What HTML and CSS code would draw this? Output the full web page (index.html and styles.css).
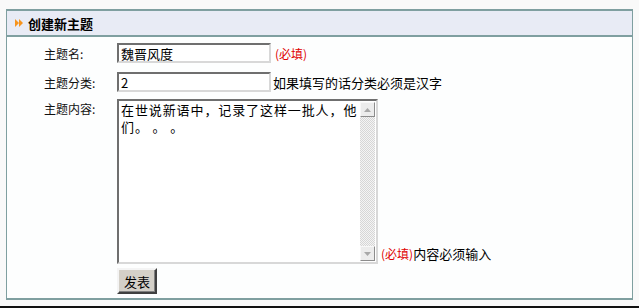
FILE: index.html
```html
<!DOCTYPE html>
<html lang="zh-CN">
<head>
    <meta charset="UTF-8">
    <title>创建新主题</title>
    <link rel="stylesheet" href="styles.css">
</head>
<body>
    <div class="panel">
        <div class="panel-header">
            <svg class="arrow-icon" width="8" height="8" viewBox="0 0 8 8">
                <polygon points="0,0 4,4 0,8" fill="#f7941d"/>
                <polygon points="4,0 8,4 4,8" fill="#f7941d"/>
            </svg>
            <span class="panel-title">创建新主题</span>
        </div>
        <form class="topic-form">
            <div class="form-row">
                <label class="form-label">主题名:</label>
                <input class="text-input" type="text" value="魏晋风度">
                <span class="required">(必填)</span>
            </div>
            <div class="form-row category-row">
                <label class="form-label">主题分类:</label>
                <input class="text-input" type="text" value="2">
                <span class="hint">如果填写的话分类必须是汉字</span>
            </div>
            <div class="form-row content-row">
                <label class="form-label">主题内容:</label>
                <div class="textarea-box">
                    <textarea class="content-input">在世说新语中，记录了这样一批人，他们。 。 。</textarea>
                    <div class="scrollbar">
                        <div class="scroll-btn">
                            <svg width="7" height="4" viewBox="0 0 7 4"><polygon points="3.5,0 7,4 0,4" fill="#a8a8a8"/></svg>
                        </div>
                        <div class="scroll-track"></div>
                        <div class="scroll-btn">
                            <svg width="7" height="4" viewBox="0 0 7 4"><polygon points="0,0 7,0 3.5,4" fill="#a8a8a8"/></svg>
                        </div>
                    </div>
                </div>
                <span class="hint content-hint"><span class="required">(必填)</span>内容必须输入</span>
            </div>
            <div class="form-row submit-row">
                <button class="submit-button" type="button">发表</button>
            </div>
        </form>
    </div>
    <div class="page-rule"></div>
</body>
</html>
```

FILE: styles.css
```css
* {
    margin: 0;
    padding: 0;
    box-sizing: border-box;
    font-family: "Noto Sans CJK SC", "DejaVu Sans", sans-serif;
}

body {
    background-color: #f9f9f9;
    padding: 9px 6px 0 6px;
    height: 308px;
    overflow: hidden;
}

.panel {
    width: 627px;
    border: 1px solid #7f9fa0;
    border-top-width: 2px;
    border-bottom-width: 2px;
    background-color: #fdfefe;
}

.panel-header {
    height: 26px;
    background-color: #e8ebf5;
    border-bottom: 2px solid #7f9fa0;
    display: flex;
    align-items: center;
    padding-left: 8px;
    gap: 5px;
}

.panel-title {
    font-size: 13px;
    font-weight: bold;
    color: #000;
    line-height: 1;
}

.topic-form {
    padding: 6px 0 4px 37px;
    display: flex;
    flex-direction: column;
}

.form-row {
    display: flex;
    align-items: center;
    margin-bottom: 9px;
}

.category-row {
    margin-bottom: 7px;
}

.form-label {
    width: 73px;
    font-size: 12px;
    color: #111;
}

.text-input {
    width: 154px;
    height: 20px;
    border: 2px solid;
    border-color: #6f6f6f #d8d8d8 #d8d8d8 #6f6f6f;
    font-size: 13px;
    padding: 0 2px;
    color: #000;
    background: #fff;
}

.required {
    color: #e00000;
    font-size: 12px;
    margin-left: 4px;
}

.hint {
    font-size: 13px;
    color: #000;
    margin-left: 2px;
}

.content-row {
    align-items: flex-start;
    margin-bottom: 4px;
}

.content-row .form-label {
    padding-top: 1px;
}

.textarea-box {
    width: 261px;
    height: 165px;
    display: flex;
    border: 2px solid;
    border-color: #6f6f6f #d8d8d8 #d8d8d8 #6f6f6f;
    background: #fff;
}

.content-input {
    flex: 1;
    border: none;
    resize: none;
    overflow: hidden;
    font-size: 13px;
    line-height: 17px;
    padding: 0 2px;
    letter-spacing: 0.9px;
    color: #000;
    outline: none;
}

.scrollbar {
    width: 15px;
    margin: 1px 1px 1px 0;
    display: flex;
    flex-direction: column;
}

.scroll-btn {
    height: 15px;
    background-color: #ececec;
    border: 1px solid;
    border-color: #f8f8f8 #8c8c8c #8c8c8c #f8f8f8;
    display: flex;
    align-items: center;
    justify-content: center;
}

.scroll-track {
    flex: 1;
    background-color: #eaeaea;
    background-image: repeating-conic-gradient(#d6d6d6 0 25%, #f4f4f4 0 50%);
    background-size: 2px 2px;
}

.content-hint {
    align-self: flex-end;
    margin-left: 3px;
    margin-bottom: 1px;
}

.content-hint .required {
    margin-left: 0;
}

.submit-row {
    padding-left: 73px;
    margin-bottom: 0;
}

.submit-button {
    width: 40px;
    height: 26px;
    font-size: 13px;
    background-color: #d4d0c8;
    border: 2px solid;
    border-color: #f4f4f4 #404040 #404040 #f4f4f4;
    box-shadow: inset -1px -1px 0 #808080;
    color: #000;
}

.page-rule {
    margin: 6px -6px 0 -6px;
    border-top: 2px solid #111;
}
```
